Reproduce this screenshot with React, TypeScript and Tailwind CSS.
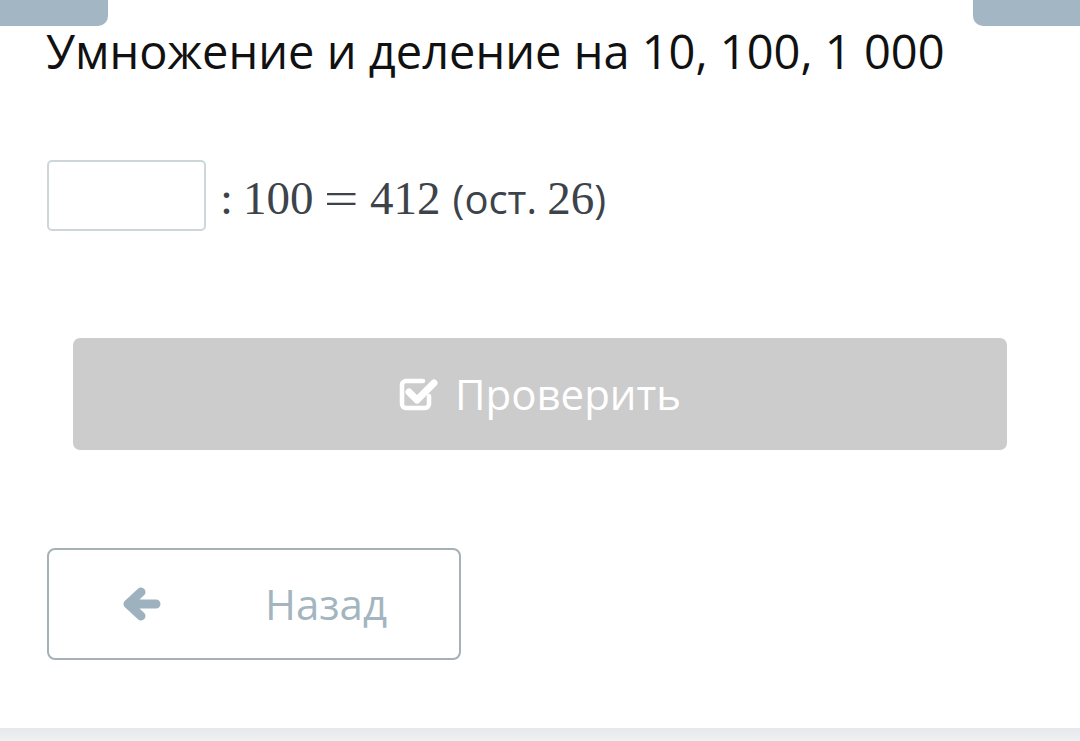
const CheckSquareIcon = () => (
  <svg width="40" height="36" viewBox="0 0 40 36" fill="none">
    <path
      d="M30 20 V28 a4 4 0 0 1 -4 4 H7 a4 4 0 0 1 -4 -4 V9 a4 4 0 0 1 4 -4 H24"
      stroke="white"
      strokeWidth="4.5"
      strokeLinecap="round"
    />
    <path
      d="M10 16 L18 24 L35 7"
      stroke="white"
      strokeWidth="7"
      strokeLinecap="round"
      strokeLinejoin="round"
    />
  </svg>
);

const ArrowLeftIcon = () => (
  <svg width="38" height="34" viewBox="0 0 38 34" fill="none">
    <path
      d="M5 17 L18 5 M5 17 L18 29 M5 17 H33"
      stroke="#9db1be"
      strokeWidth="9"
      strokeLinecap="round"
      strokeLinejoin="round"
    />
  </svg>
);

const serif = { fontFamily: '"Liberation Serif", "DejaVu Serif", serif' };

export default function App() {
  return (
    <div
      className="min-h-screen flex flex-col bg-white"
      style={{ fontFamily: '"Open Sans", "Noto Sans", sans-serif' }}
    >
      <div className="flex justify-between h-[26px]">
        <div className="w-[108px] bg-[#a3b6c3] rounded-br-[10px]" />
        <div className="w-[107px] bg-[#a3b6c3] rounded-bl-[10px]" />
      </div>

      <div className="flex-1 px-[47px]">
        <h1 className="text-[47px] leading-[54px] text-[#111] -ml-[1px] -mt-[2px]">
          Умножение и деление на 10, 100, 1 000
        </h1>

        <div className="flex items-center mt-[79px]">
          <div className="w-[159px] h-[71px] border-2 border-[#cdd7da] rounded-[5px]" />
          <div className="ml-[14px] mt-[6px] flex items-baseline text-[#3c434a]">
            <span style={serif} className="text-[47px]">:</span>
            <span style={serif} className="text-[47px] ml-[10px]">100</span>
            <span style={serif} className="text-[47px] ml-[14px] inline-block scale-x-[1.3]">=</span>
            <span style={serif} className="text-[47px] ml-[16px]">412</span>
            <span className="text-[40px] ml-[12px]">(ост.&nbsp;</span>
            <span style={serif} className="text-[47px]">26</span>
            <span className="text-[40px]">)</span>
          </div>
        </div>

        <div className="px-[26px] mt-[104px]">
          <button className="w-full h-[112px] bg-[#cccccc] rounded-[7px] flex items-center justify-center gap-[16px] text-white text-[42px]">
            <CheckSquareIcon />
            <span>Проверить</span>
          </button>
        </div>

        <button className="mt-[98px] w-[414px] h-[112px] border-2 border-[#a5b1b6] rounded-[8px] flex items-center text-[#a3b5bf] text-[42px]">
          <span className="ml-[74px]">
            <ArrowLeftIcon />
          </span>
          <span className="ml-[104px]">Назад</span>
        </button>
      </div>

      <div className="h-[13px] bg-gradient-to-b from-[#e6e8ec] to-[#eef1f4]" />
    </div>
  );
}
